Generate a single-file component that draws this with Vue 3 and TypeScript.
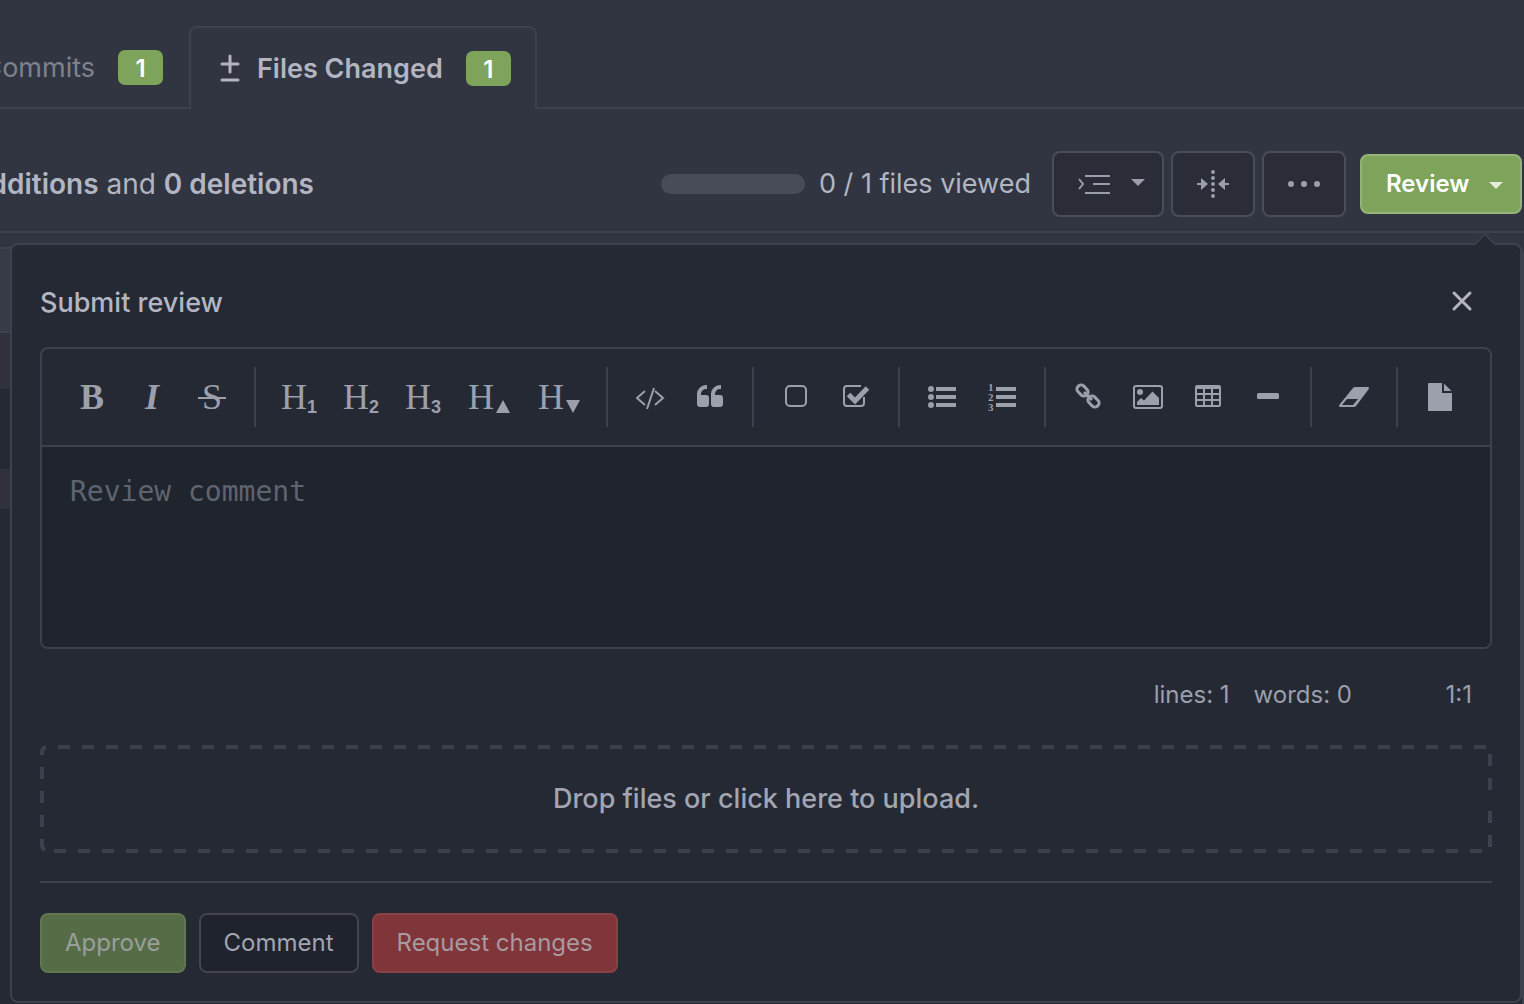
<script setup lang="ts">
import { ref, computed } from 'vue'

interface Tool {
  name: string
  letter?: string
  sub?: string
  style?: string
  icon?: string
  wide?: string
}

const comment = ref('')
const lineCount = computed(() => comment.value.split('\n').length)
const wordCount = computed(() => comment.value.split(/\s+/).filter(Boolean).length)

const groups: Tool[][] = [
  [
    { name: 'Bold', letter: 'B', style: 'bold' },
    { name: 'Italic', letter: 'I', style: 'italic' },
    { name: 'Strikethrough', letter: 'S', style: 'strike' },
  ],
  [
    { name: 'Heading 1', letter: 'H', sub: '1', wide: 'heading' },
    { name: 'Heading 2', letter: 'H', sub: '2', wide: 'heading' },
    { name: 'Heading 3', letter: 'H', sub: '3', wide: 'heading' },
    { name: 'Bigger heading', letter: 'H', icon: 'up', wide: 'step' },
    { name: 'Smaller heading', letter: 'H', icon: 'down', wide: 'step' },
  ],
  [
    { name: 'Code', icon: 'code' },
    { name: 'Quote', icon: 'quote' },
  ],
  [
    { name: 'Empty checkbox', icon: 'box' },
    { name: 'Checked checkbox', icon: 'check' },
  ],
  [
    { name: 'Unordered list', icon: 'ul' },
    { name: 'Ordered list', icon: 'ol' },
  ],
  [
    { name: 'Link', icon: 'link' },
    { name: 'Image', icon: 'image' },
    { name: 'Table', icon: 'table' },
    { name: 'Horizontal rule', icon: 'rule' },
  ],
  [{ name: 'Clean block', icon: 'eraser' }],
  [{ name: 'Plain text editor', icon: 'file' }],
]
</script>

<template>
  <div class="page">
    <nav class="tabs">
      <a class="tab tab-commits" href="#commits">Commits <span class="badge">1</span></a>
      <a class="tab tab-active" href="#files">
        <svg class="diff-icon" viewBox="0 0 24 30" aria-hidden="true">
          <path d="M12 2v16M4 10h16M4 26h16" />
        </svg>
        <span>Files Changed</span>
        <span class="badge">1</span>
      </a>
      <span class="tabs-rest"></span>
    </nav>

    <div class="bar">
      <div class="stats"><span><b>additions</b> and <b>0 deletions</b></span></div>
      <div class="viewed">
        <span class="progress"></span>
        <span>0 / 1 files viewed</span>
      </div>
      <div class="bar-buttons">
        <button class="tool-button whitespace" type="button" aria-label="Whitespace">
          <svg viewBox="0 0 68 32" width="68" height="32">
            <path class="thin" d="M5 11l4 5-4 5M11 8h25M19 16h17M11 25h25" />
            <path d="M57 11h14l-7 7z" />
          </svg>
        </button>
        <button class="tool-button" type="button" aria-label="Split view">
          <svg viewBox="0 0 32 32" width="32" height="32">
            <path d="M0 15h4v-5l7 6-7 6v-5H0zM32 15h-4v-5l-7 6 7 6v-5h4z" />
            <circle v-for="y in [4, 10, 16, 22, 28]" :key="y" cx="16" :cy="y" r="2" />
          </svg>
        </button>
        <button class="tool-button" type="button" aria-label="More options">
          <svg viewBox="0 0 32 32" width="32" height="32">
            <circle v-for="x in [3, 16, 29]" :key="x" :cx="x" cy="16" r="3" />
          </svg>
        </button>
      </div>
      <button class="review-button" type="button">
        Review
        <svg viewBox="0 0 14 10" width="14" height="10" aria-hidden="true"><path d="M0 3h14l-7 7z" /></svg>
      </button>

      <section class="panel">
        <span class="arrow"></span>
        <header class="panel-head">
          <label for="review-comment">Submit review</label>
          <button class="close" type="button" aria-label="Close">
            <svg viewBox="0 0 24 24" width="24" height="24"><path d="M4 4l16 16M20 4L4 20" /></svg>
          </button>
        </header>

        <div class="editor">
          <div class="toolbar">
            <div v-for="(group, g) in groups" :key="g" class="group">
              <button
                v-for="tool in group"
                :key="tool.name"
                type="button"
                class="tool"
                :class="tool.wide"
                :aria-label="tool.name"
              >
                <span v-if="tool.letter" class="letter" :class="tool.style">{{ tool.letter }}</span>
                <span v-if="tool.sub" class="sub">{{ tool.sub }}</span>
                <svg v-if="tool.icon === 'up'" class="step-icon" viewBox="0 0 14 14"><path d="M7 1l7 13H0z" /></svg>
                <svg v-else-if="tool.icon === 'down'" class="step-icon" viewBox="0 0 14 14"><path d="M0 1h14L7 14z" /></svg>
                <svg v-else-if="tool.icon" class="icon" viewBox="0 0 60 60">
                  <path v-if="tool.icon === 'code'" class="line" d="M25 24l-8 7 8 7M35 24l8 7-8 7M34 21l-7 21" />
                  <template v-if="tool.icon === 'quote'">
                    <path
                      v-for="x in [0, 14]"
                      :key="x"
                      :transform="`translate(${x} 0)`"
                      d="M26 18h1v4h-1a5 5 0 0 0-5 5v1h5a3 3 0 0 1 3 3v6a3 3 0 0 1-3 3h-6a3 3 0 0 1-3-3V27a9 9 0 0 1 9-9z"
                    />
                  </template>
                  <rect v-if="tool.icon === 'box'" class="line" x="20" y="19" width="20" height="20" rx="4" />
                  <template v-if="tool.icon === 'check'">
                    <path class="line" d="M35 19H21a3 3 0 0 0-3 3v14a3 3 0 0 0 3 3h14a3 3 0 0 0 3-3v-6" />
                    <path class="check" d="M22.500 27.500l6.500 6.500 12.500-13" />
                  </template>
                  <template v-if="tool.icon === 'ul'">
                    <circle v-for="y in [22, 30, 38]" :key="y" cx="19" :cy="y" r="3" />
                    <path d="M24 20h20v4H24zM24 28h20v4H24zM24 36h20v4H24z" />
                  </template>
                  <template v-if="tool.icon === 'ol'">
                    <text v-for="n in 3" :key="n" x="16" :y="14 + n * 10">{{ n }}</text>
                    <path d="M24 20h20v4H24zM24 28h20v4H24zM24 36h20v4H24z" />
                  </template>
                  <template v-if="tool.icon === 'link'">
                    <rect class="chain" x="18.500" y="19.500" width="12" height="8" rx="3.500" transform="rotate(45 24.500 23.500)" />
                    <rect class="chain" x="29.500" y="30.500" width="12" height="8" rx="3.500" transform="rotate(45 35.500 34.500)" />
                    <path class="chain" d="M26 25l8 8" />
                  </template>
                  <template v-if="tool.icon === 'image'">
                    <rect class="line" x="16" y="19" width="28" height="22" rx="2" />
                    <circle cx="22" cy="25" r="3" />
                    <path d="M19 38v-3l4-4 3 2.500 8.500-9L41 31v7z" />
                  </template>
                  <path
                    v-if="tool.icon === 'table'"
                    fill-rule="evenodd"
                    d="M19 18h22a2 2 0 0 1 2 2v18a2 2 0 0 1-2 2H19a2 2 0 0 1-2-2V20a2 2 0 0 1 2-2zM19 22v4h6v-4zM27 22v4h6v-4zM35 22v4h6v-4zM19 28v4h6v-4zM27 28v4h6v-4zM35 28v4h6v-4zM19 34v4h6v-4zM27 34v4h6v-4zM35 34v4h6v-4z"
                  />
                  <rect v-if="tool.icon === 'rule'" x="19" y="26" width="22" height="6" rx="1.500" />
                  <path
                    v-if="tool.icon === 'eraser'"
                    fill-rule="evenodd"
                    d="M31 20h13q2 1 0 3L32 39q-1 1-2 1H16q-2-1 0-3l13-16q1-1 2-1zM23 32l-5 6h11l5-6z"
                  />
                  <path v-if="tool.icon === 'file'" d="M19 16h13v10h10v17q0 1-1 1H19q-1 0-1-1V17q0-1 1-1zM34 16.500l7.500 7.500H34z" />
                </svg>
              </button>
            </div>
          </div>
          <textarea id="review-comment" v-model="comment" placeholder="Review comment"></textarea>
        </div>

        <div class="status">
          <span>lines: {{ lineCount }}</span>
          <span>words: {{ wordCount }}</span>
          <span class="cursor">1:1</span>
        </div>

        <button class="dropzone" type="button">
          <svg class="dashes" aria-hidden="true">
            <line x1="18" y1="2" x2="100%" y2="2" stroke-dasharray="12 12" />
            <line x1="14" y1="106" x2="100%" y2="106" stroke-dasharray="12 12" />
            <svg x="100%" overflow="visible"><path d="M-2 9V102" stroke-dasharray="12 12 12 21 12 12 12 12" /></svg>
            <path d="M2 22V83" stroke-dasharray="12 12" />
            <path d="M2 10V8q0-5 4-6M2 94v6q0 3 3 5" />
          </svg>
          Drop files or click here to upload.
        </button>

        <footer class="actions">
          <button class="action approve" type="button">Approve</button>
          <button class="action" type="button">Comment</button>
          <button class="action reject" type="button">Request changes</button>
        </footer>
      </section>
    </div>

    <div class="diff">
      <div class="diff-head"></div>
      <div class="diff-hunk"></div>
      <div class="diff-lines"></div>
      <div class="diff-fold"></div>
    </div>
  </div>
</template>

<style>
body {
  margin: 0;
  background: #313541;
}
</style>

<style scoped>
.page {
  display: flex;
  flex-direction: column;
  height: 100vh;
  overflow: hidden;
  background: #313541;
  color: #b3b6c2;
  font: 27px/36px Inter, "Liberation Sans", sans-serif;
}
button {
  margin: 0;
  padding: 0;
  font: inherit;
  color: inherit;
  background: none;
  border: 0;
  box-sizing: border-box;
}
svg {
  display: block;
  fill: currentColor;
}
.tabs {
  display: flex;
  flex: none;
  padding-top: 26px;
}
.tab {
  display: flex;
  align-items: center;
  box-sizing: border-box;
  height: 83px;
  color: inherit;
  text-decoration: none;
  white-space: nowrap;
}
.tab-commits {
  width: 189px;
  justify-content: flex-end;
  padding: 2px 26px 0 0;
  color: #7e818d;
  border-bottom: 2px solid #3d414d;
}
.tab-active {
  padding: 0 24px 0 27px;
  font-weight: 600;
  border: 2px solid #3d414d;
  border-bottom: 0;
  border-radius: 8px 8px 0 0;
}
.tabs-rest {
  flex: 1;
  border-bottom: 2px solid #3d414d;
}
.diff-icon {
  width: 24px;
  height: 30px;
  margin-right: 15px;
  fill: none;
  stroke: currentColor;
  stroke-width: 3;
  stroke-linecap: round;
}
.badge {
  flex: none;
  width: 45px;
  height: 35px;
  margin-left: 23px;
  border-radius: 7px;
  background: #7ea35b;
  color: #fff;
  font-size: 24px;
  font-weight: 600;
  line-height: 37px;
  text-align: center;
}
.bar {
  position: relative;
  display: flex;
  flex: none;
  align-items: center;
  height: 94px;
  padding: 28px 2px 0 0;
  border-bottom: 2px solid #3d414d;
}
.stats {
  display: flex;
  justify-content: flex-end;
  width: 314px;
  font-size: 28px;
  white-space: nowrap;
}
.stats b {
  font-weight: 600;
}
.viewed {
  display: flex;
  align-items: center;
  gap: 14px;
  margin-left: auto;
  margin-right: 21px;
}
.progress {
  width: 144px;
  height: 20px;
  border-radius: 10px;
  background: #484c59;
}
.bar-buttons {
  display: flex;
  gap: 7px;
  margin-right: 14px;
}
.tool-button {
  display: flex;
  align-items: center;
  justify-content: center;
  width: 84px;
  height: 66px;
  border: 2px solid #4b4c57;
  border-radius: 8px;
  background: #2a2d38;
  color: #9a9dab;
}
.whitespace {
  width: 112px;
}
.whitespace svg {
  overflow: visible;
}
.thin {
  fill: none;
  stroke: currentColor;
  stroke-width: 2;
}
.review-button {
  display: flex;
  align-items: center;
  justify-content: space-between;
  width: 162px;
  height: 60px;
  padding: 0 17px 0 24px;
  border: 2px solid #94b376;
  border-radius: 8px;
  background: #7ea35b;
  color: #fff;
  font-size: 24px;
  font-weight: 600;
}
.review-button svg {
  opacity: 0.8;
}
.panel {
  position: absolute;
  z-index: 1;
  top: calc(100% + 12px);
  left: 10px;
  right: 2px;
  padding: 28px;
  border: 2px solid #3d414d;
  border-radius: 8px;
  background: #252933;
}
.arrow {
  position: absolute;
  top: -9px;
  right: 27px;
  width: 14px;
  height: 14px;
  border: 2px solid #3d414d;
  border-width: 2px 0 0 2px;
  background: #252933;
  transform: rotate(45deg);
}
.panel-head {
  display: flex;
  align-items: center;
  justify-content: space-between;
  height: 60px;
  margin-bottom: 14px;
  font-weight: 500;
}
.close {
  margin-right: 18px;
  padding-bottom: 4px;
}
.close path {
  stroke: currentColor;
  stroke-width: 3;
  stroke-linecap: round;
}
.editor {
  border: 2px solid #3d414d;
  border-radius: 8px;
  overflow: hidden;
}
.toolbar {
  display: flex;
  padding: 18px 20px;
  border-bottom: 2px solid #3d414d;
  color: #9c9fac;
}
.group {
  display: flex;
}
.group + .group {
  margin-left: 12px;
  padding-left: 12px;
  border-left: 2px solid #3d414d;
}
.tool {
  display: flex;
  align-items: center;
  justify-content: center;
  width: 60px;
  height: 60px;
}
.heading {
  width: 62px;
}
.step {
  width: 70px;
}
.letter {
  font: 36px/60px "Liberation Serif", serif;
}
.bold {
  font-weight: bold;
}
.italic {
  font-style: italic;
  font-weight: bold;
}
.strike {
  width: 28px;
  background: linear-gradient(currentColor, currentColor) 0 30px / 100% 2px no-repeat;
}
.sub {
  padding-top: 20px;
  font-family: "Liberation Sans", sans-serif;
  font-size: 18px;
  font-weight: 700;
  line-height: 24px;
}
.step-icon {
  width: 14px;
  height: 14px;
  margin: 17px 0 0 2px;
}
.icon {
  width: 60px;
  height: 60px;
}
.icon text {
  font: bold 11px "Liberation Serif", serif;
}
.line,
.check,
.chain {
  fill: none;
  stroke: currentColor;
  stroke-width: 2;
}
.check {
  stroke-width: 5;
}
.chain {
  stroke-width: 3;
}
textarea {
  display: block;
  box-sizing: border-box;
  width: 100%;
  height: 200px;
  padding: 27px 28px;
  border: 0;
  outline: 0;
  resize: none;
  background: #20242d;
  color: #b3b6c2;
  font: 28px/36px "DejaVu Sans Mono", monospace;
}
textarea::placeholder {
  color: #5e646f;
  opacity: 1;
}
.status {
  display: flex;
  justify-content: flex-end;
  gap: 24px;
  padding: 28px 20px 32px;
  font-size: 24px;
  color: #9c9fac;
}
.cursor {
  min-width: 96px;
  text-align: right;
}
.dropzone {
  position: relative;
  display: block;
  width: 100%;
  height: 108px;
  color: #a2a5b2;
  font-weight: 500;
}
.dashes {
  position: absolute;
  inset: 0;
  width: 100%;
  height: 100%;
  fill: none;
  stroke: #3d414d;
  stroke-width: 4;
}
.dashes svg {
  fill: none;
}
.actions {
  display: flex;
  gap: 13px;
  margin-top: 28px;
  padding-top: 30px;
  border-top: 2px solid #3d414d;
}
.action {
  height: 60px;
  padding: 0 23px;
  border: 2px solid #42444f;
  border-radius: 8px;
  background: #1f232c;
  color: #a2a5b2;
  font-size: 24px;
}
.approve {
  border-color: #61774f;
  background: #566c47;
  color: #9a9f9b;
}
.reject {
  border-color: #8a4045;
  background: #7f353a;
  color: #a89a9f;
}
.diff {
  flex: 1;
  display: flex;
  flex-direction: column;
  margin-top: 14px;
  border: 2px solid #3d414d;
  border-width: 2px 2px 0 0;
  border-radius: 0 8px 0 0;
  background: #252933;
}
.diff-head {
  height: 82px;
  background: #373b47;
  border-bottom: 2px solid #3d414d;
}
.diff-hunk {
  height: 56px;
  background: #30313c;
}
.diff-lines {
  height: 80px;
}
.diff-fold {
  height: 40px;
  background: #30313c;
}
</style>
